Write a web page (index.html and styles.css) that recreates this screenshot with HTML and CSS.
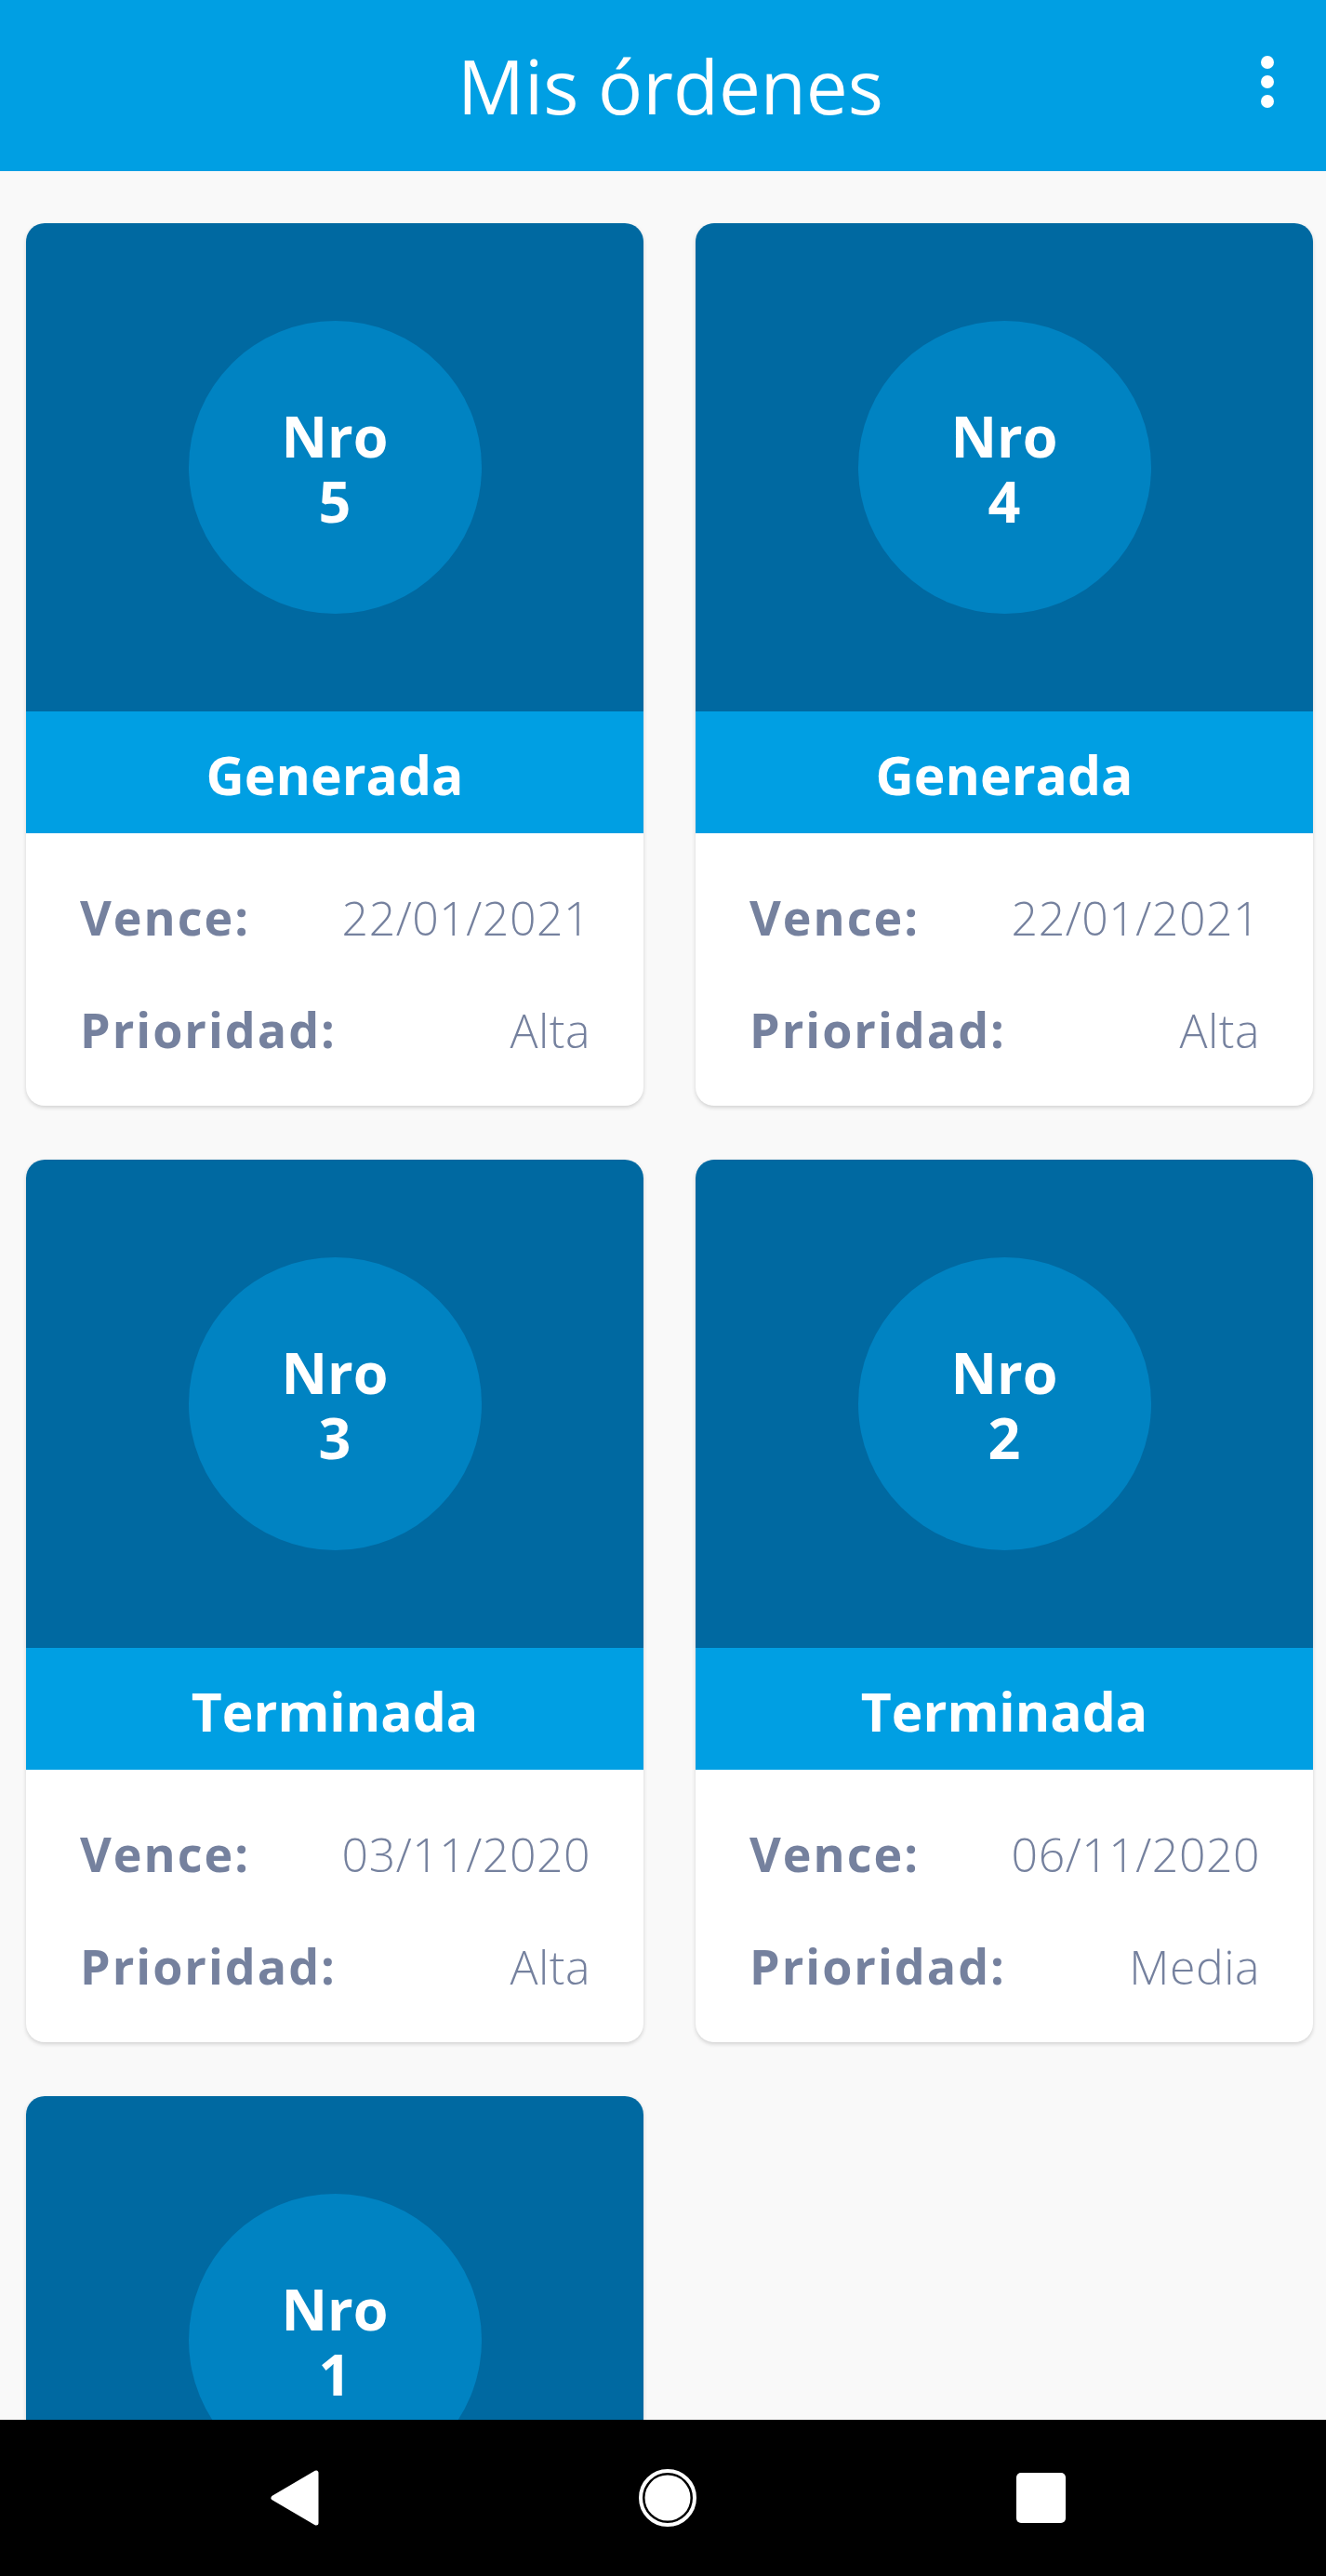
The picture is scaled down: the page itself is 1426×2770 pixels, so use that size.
FILE: index.html
```html
<!DOCTYPE html>
<html lang="es">
  <head>
    <meta charset="UTF-8" />
    <meta name="viewport" content="width=device-width, initial-scale=1.0" />
    <title>Mis órdenes</title>
    <link rel="stylesheet" href="styles.css">
  </head>
  <body>
    <div class="screen">
      <!-- App bar -->
      <header class="appbar">
        <span></span>
        <h1 class="appbar-title">Mis órdenes</h1>
        <button class="menu" aria-label="Más opciones">
          <i></i><i></i><i></i>
        </button>
      </header>

      <!-- Orders -->
      <main class="orders">
        <div class="order">
          <div class="order-top">
            <div class="order-num"><span>Nro</span><span>5</span></div>
          </div>
          <div class="order-status">Generada</div>
          <div class="order-info">
            <div class="row"><span class="label">Vence:</span><span class="value">22/01/2021</span></div>
            <div class="row"><span class="label">Prioridad:</span><span class="value">Alta</span></div>
          </div>
        </div>

        <div class="order">
          <div class="order-top">
            <div class="order-num"><span>Nro</span><span>4</span></div>
          </div>
          <div class="order-status">Generada</div>
          <div class="order-info">
            <div class="row"><span class="label">Vence:</span><span class="value">22/01/2021</span></div>
            <div class="row"><span class="label">Prioridad:</span><span class="value">Alta</span></div>
          </div>
        </div>

        <div class="order">
          <div class="order-top">
            <div class="order-num"><span>Nro</span><span>3</span></div>
          </div>
          <div class="order-status">Terminada</div>
          <div class="order-info">
            <div class="row"><span class="label">Vence:</span><span class="value">03/11/2020</span></div>
            <div class="row"><span class="label">Prioridad:</span><span class="value">Alta</span></div>
          </div>
        </div>

        <div class="order">
          <div class="order-top">
            <div class="order-num"><span>Nro</span><span>2</span></div>
          </div>
          <div class="order-status">Terminada</div>
          <div class="order-info">
            <div class="row"><span class="label">Vence:</span><span class="value">06/11/2020</span></div>
            <div class="row"><span class="label">Prioridad:</span><span class="value">Media</span></div>
          </div>
        </div>

        <div class="order">
          <div class="order-top">
            <div class="order-num"><span>Nro</span><span>1</span></div>
          </div>
          <div class="order-status">Generada</div>
          <div class="order-info">
            <div class="row"><span class="label">Vence:</span><span class="value">22/01/2021</span></div>
            <div class="row"><span class="label">Prioridad:</span><span class="value">Alta</span></div>
          </div>
        </div>
      </main>

      <!-- System navigation -->
      <nav class="navbar">
        <span class="nav-btn">
          <svg width="56" height="62" viewBox="0 0 56 62">
            <path d="M5 31 L51 4 L51 58 Z" fill="#fff" stroke="#fff" stroke-width="5" stroke-linejoin="round" />
          </svg>
        </span>
        <span class="nav-btn">
          <svg width="64" height="64" viewBox="0 0 64 64">
            <circle cx="32" cy="32" r="29" fill="none" stroke="#fff" stroke-width="4" />
            <circle cx="32" cy="32" r="24.5" fill="#fff" />
          </svg>
        </span>
        <span class="nav-btn">
          <span class="square"></span>
        </span>
      </nav>
    </div>
  </body>
</html>
```

FILE: styles.css
```css
* {
  box-sizing: border-box;
}
html,
body {
  margin: 0;
  height: 100%;
}
body {
  font-family: "Open Sans", "Noto Sans", Arial, sans-serif;
  background: #f9f9f9;
  overflow: hidden;
}
.screen {
  display: flex;
  flex-direction: column;
  height: 100vh;
}

/* App bar */
.appbar {
  flex: none;
  height: 184px;
  background: #009fe3;
  display: grid;
  grid-template-columns: 1fr auto 1fr;
  align-items: center;
}
.appbar-title {
  margin: 0 0 0 16px;
  color: #fff;
  font-size: 80px;
  font-weight: 400;
  line-height: 1;
}
.menu {
  justify-self: end;
  margin: 0 56px 8px 0;
  padding: 0;
  border: none;
  background: none;
  display: flex;
  flex-direction: column;
  gap: 7px;
}
.menu i {
  display: block;
  width: 14px;
  height: 14px;
  border-radius: 50%;
  background: #fff;
}

/* Grid of orders */
.orders {
  flex: 1;
  min-height: 0;
  overflow: hidden;
  padding: 56px 14px 0 28px;
  display: grid;
  grid-template-columns: 1fr 1fr;
  grid-auto-rows: max-content;
  column-gap: 56px;
  row-gap: 58px;
  align-content: start;
}
.order {
  border-radius: 20px;
  background: #fff;
  overflow: hidden;
  box-shadow: 0 2px 4px rgba(0, 0, 0, 0.16);
}
.order-top {
  height: 525px;
  background: #0069a1;
  display: flex;
  align-items: center;
  justify-content: center;
}
.order-num {
  width: 315px;
  height: 315px;
  border-radius: 50%;
  background: #0083c2;
  color: #fff;
  font-size: 61px;
  font-weight: 700;
  line-height: 70px;
  display: flex;
  flex-direction: column;
  align-items: center;
  justify-content: center;
  padding-top: 2px;
}
.order-status {
  height: 131px;
  background: #009fe3;
  color: #fff;
  font-size: 57px;
  font-weight: 700;
  display: flex;
  align-items: center;
  justify-content: center;
  padding-top: 4px;
}
.order-info {
  height: 293px;
  padding: 60px 57px 0 58px;
  display: flex;
  flex-direction: column;
  gap: 60px;
  color: #75819e;
}
.row {
  display: flex;
  justify-content: space-between;
  align-items: baseline;
  line-height: 60px;
}
.label {
  font-size: 52px;
  font-weight: 700;
  letter-spacing: 2px;
}
.value {
  font-size: 50px;
  font-weight: 300;
  letter-spacing: 0.5px;
}

/* Android navigation bar */
.navbar {
  flex: none;
  height: 168px;
  padding-left: 10px;
  background: #000;
  display: flex;
  align-items: center;
  justify-content: center;
  gap: 321px;
}
.nav-btn {
  width: 80px;
  height: 80px;
  display: flex;
  align-items: center;
  justify-content: center;
}
.square {
  width: 53px;
  height: 54px;
  border-radius: 5px;
  background: #fff;
}
```
